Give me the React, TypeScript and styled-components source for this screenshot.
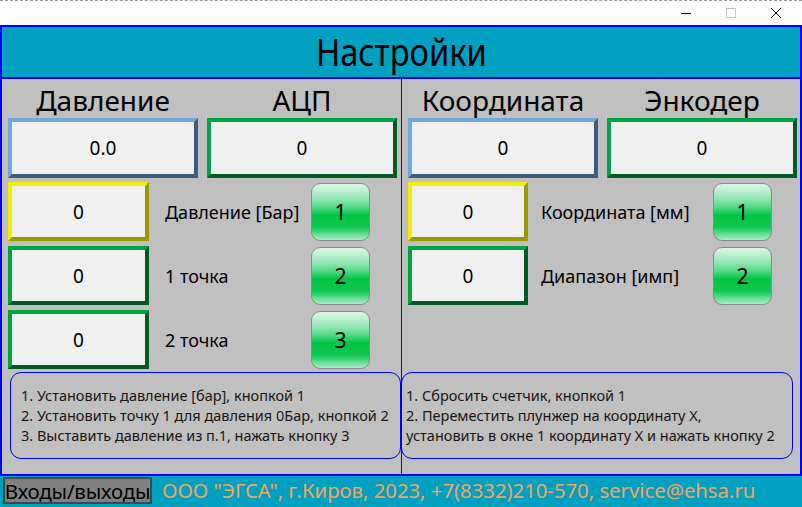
import React from 'react'
import styled, { createGlobalStyle } from 'styled-components';

const GlobalStyle = createGlobalStyle`
  html, body {
    margin: 0;
    padding: 0;
    background: #ffffff;
  }
  body {
    font-family: "Noto Sans", "Open Sans", sans-serif;
    color: #000;
  }
`;

type Tone = 'blue' | 'green' | 'yellow';

const bevel: Record<Tone, [string, string]> = {
  blue: ['#72a9dc', '#3f5e7e'],
  green: ['#00a444', '#005c22'],
  yellow: ['#f2f000', '#9c9800'],
};

const Window = styled.div`
  width: 802px;
  height: 507px;
  display: flex;
  flex-direction: column;
  background: #fff;
  overflow: hidden;
`;

const TitleBar = styled.div`
  height: 24px;
  border-top: 1px dashed #9a9a9a;
  display: flex;
  justify-content: flex-end;
  align-items: center;
  padding-right: 4px;
`;

const WinButton = styled.div`
  width: 45px;
  height: 24px;
  display: flex;
  align-items: center;
  justify-content: center;
`;

const Frame = styled.div`
  border: 2px solid #0000ff;
  height: 447px;
  display: flex;
  flex-direction: column;
  background: #c0c0c0;
`;

const Header = styled.div`
  height: 50px;
  border-bottom: 2px solid #0000ff;
  background: #00a0c0;
  display: flex;
  align-items: center;
  justify-content: center;
`;

const Title = styled.span`
  font-size: 38px;
  line-height: 1;
  display: inline-block;
  transform: scaleX(0.86);
  margin-top: -2px;
`;

const Content = styled.div`
  flex: 1;
  display: grid;
  grid-template-columns: 399px 1px 398px;
`;

const Divider = styled.div`
  background: #0000ff;
`;

const Panel = styled.div`
  display: flex;
  flex-direction: column;
  padding-left: 6px;
`;

const PairRow = styled.div`
  display: grid;
  grid-template-columns: 190px 190px;
  column-gap: 9px;
`;

const Heading = styled.div`
  height: 39px;
  display: flex;
  align-items: center;
  justify-content: center;
  font-size: 28px;
  padding-top: 2px;
  box-sizing: border-box;
`;

const ValueBox = styled.div<{ $tone: Tone; $h?: number }>`
  height: ${p => p.$h ?? 60}px;
  box-sizing: border-box;
  border: 4px solid;
  border-color: ${p => bevel[p.$tone][0]} ${p => bevel[p.$tone][1]} ${p => bevel[p.$tone][1]} ${p => bevel[p.$tone][0]};
  background: #f0f0f0;
  display: flex;
  align-items: center;
  justify-content: center;
  font-size: 19px;
`;

const Rows = styled.div`
  display: flex;
  flex-direction: column;
  gap: 5px;
  margin-top: 4px;
`;

const SetRow = styled.div<{ $box: number; $label: number; $pad: number }>`
  display: grid;
  grid-template-columns: ${p => p.$box}px ${p => p.$label}px 59px;
  height: 59px;
  align-items: center;

  & > span {
    padding-left: ${p => p.$pad}px;
    font-size: 18px;
    white-space: nowrap;
  }
`;

const GreenButton = styled.div`
  height: 58px;
  box-sizing: border-box;
  border: 1px solid #8a8a8a;
  border-radius: 9px;
  background: linear-gradient(
    to bottom,
    #d8f8e4 0%,
    #a2eabf 22%,
    #4ed884 42%,
    #00c444 56%,
    #10c64e 76%,
    #a6f0c6 100%
  );
  display: flex;
  align-items: center;
  justify-content: center;
  font-size: 21px;
`;

const InfoBox = styled.div<{ $ml: number; $pl: number }>`
  margin-top: auto;
  margin-bottom: 15px;
  margin-left: ${p => p.$ml}px;
  width: ${p => (p.$ml < 0 ? 392 : 391)}px;
  height: 87px;
  box-sizing: border-box;
  border: 1px solid #0000ff;
  border-radius: 11px;
  padding: 12px 0 0 ${p => p.$pl}px;
  font-size: 14.5px;
  line-height: 20px;
  color: #1c1414;
  white-space: nowrap;
`;

const Footer = styled.div`
  flex: 1;
  background: #00a0c0;
  display: flex;
  align-items: flex-start;
  padding: 1px 0 0 3px;
  gap: 10px;
`;

const IoButton = styled.div`
  width: 149px;
  height: 27px;
  box-sizing: border-box;
  border: 2px solid #3c4a4c;
  background: #808080;
  display: flex;
  align-items: center;
  justify-content: center;
  font-size: 20.5px;
  letter-spacing: -0.2px;
  white-space: nowrap;
`;

const Company = styled.div`
  color: #f4a460;
  font-size: 20.3px;
  line-height: 27px;
  white-space: nowrap;
`;

function Controls() {
  return (
    <TitleBar>
      <WinButton>
        <svg width="12" height="12" viewBox="0 0 12 12">
          <line x1="1" y1="6.5" x2="11" y2="6.5" stroke="#000" strokeWidth="1" />
        </svg>
      </WinButton>
      <WinButton>
        <svg width="12" height="12" viewBox="0 0 12 12">
          <rect x="1.5" y="1.5" width="9" height="9" fill="none" stroke="#c8c8c8" strokeWidth="1" />
        </svg>
      </WinButton>
      <WinButton>
        <svg width="12" height="12" viewBox="0 0 12 12">
          <path d="M1 1 L11 11 M11 1 L1 11" stroke="#000" strokeWidth="1" />
        </svg>
      </WinButton>
    </TitleBar>
  );
}

function App() {
  return (
    <Window>
      <GlobalStyle />
      <Controls />
      <Frame>
        <Header>
          <Title>Настройки</Title>
        </Header>
        <Content>
          <Panel>
            <PairRow>
              <Heading>Давление</Heading>
              <Heading>АЦП</Heading>
            </PairRow>
            <PairRow>
              <ValueBox $tone="blue">0.0</ValueBox>
              <ValueBox $tone="green">0</ValueBox>
            </PairRow>
            <Rows>
              <SetRow $box={141} $label={162} $pad={16}>
                <ValueBox $tone="yellow" $h={59}>0</ValueBox>
                <span>Давление [Бар]</span>
                <GreenButton>1</GreenButton>
              </SetRow>
              <SetRow $box={141} $label={162} $pad={16}>
                <ValueBox $tone="green" $h={59}>0</ValueBox>
                <span>1 точка</span>
                <GreenButton>2</GreenButton>
              </SetRow>
              <SetRow $box={141} $label={162} $pad={16}>
                <ValueBox $tone="green" $h={59}>0</ValueBox>
                <span>2 точка</span>
                <GreenButton>3</GreenButton>
              </SetRow>
            </Rows>
            <InfoBox $ml={2} $pl={10}>
              1. Установить давление [бар], кнопкой 1<br />
              2. Установить точку 1 для давления 0Бар, кнопкой 2<br />
              3. Выставить давление из п.1, нажать кнопку 3
            </InfoBox>
          </Panel>
          <Divider />
          <Panel>
            <PairRow>
              <Heading>Координата</Heading>
              <Heading>Энкодер</Heading>
            </PairRow>
            <PairRow>
              <ValueBox $tone="blue">0</ValueBox>
              <ValueBox $tone="green">0</ValueBox>
            </PairRow>
            <Rows>
              <SetRow $box={120} $label={185} $pad={13}>
                <ValueBox $tone="yellow" $h={59}>0</ValueBox>
                <span>Координата [мм]</span>
                <GreenButton>1</GreenButton>
              </SetRow>
              <SetRow $box={120} $label={185} $pad={13}>
                <ValueBox $tone="green" $h={59}>0</ValueBox>
                <span>Диапазон [имп]</span>
                <GreenButton>2</GreenButton>
              </SetRow>
            </Rows>
            <InfoBox $ml={-7} $pl={4}>
              1. Сбросить счетчик, кнопкой 1<br />
              2. Переместить плунжер на координату X,<br />
              установить в окне 1 координату X и нажать кнопку 2
            </InfoBox>
          </Panel>
        </Content>
      </Frame>
      <Footer>
        <IoButton>Входы/выходы</IoButton>
        <Company>ООО "ЭГСА", г.Киров, 2023, +7(8332)210-570, service@ehsa.ru</Company>
      </Footer>
    </Window>
  );
}

export default App
